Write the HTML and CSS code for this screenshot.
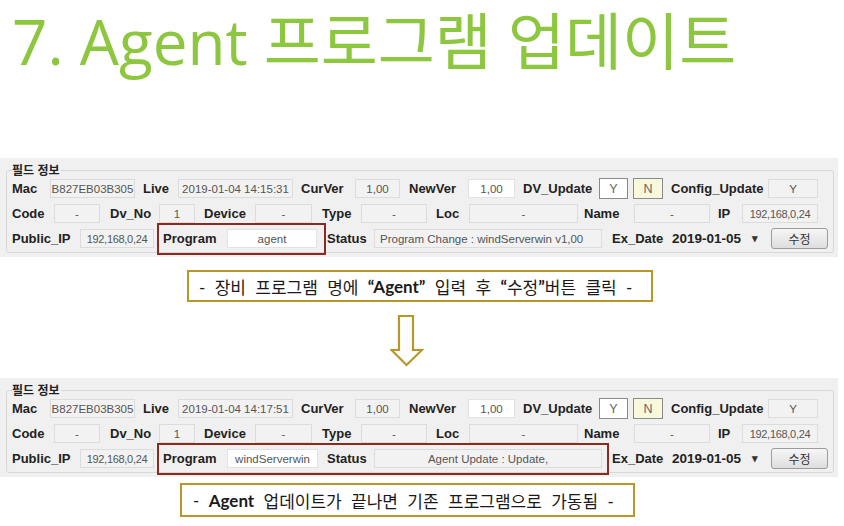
FILE: index.html
```html
<!DOCTYPE html>
<html lang="ko">
<head>
<meta charset="utf-8">
<title>Agent 프로그램 업데이트</title>
<link rel="stylesheet" href="styles.css">
</head>
<body>
<h1 class="title">7. Agent 프로그램 업데이트</h1>

<section class="panel">
  <fieldset class="group">
    <legend class="legend">필드 정보</legend>
    <div class="row">
      <span class="lbl w38">Mac</span><span class="box w85">B827EB03B305</span>
      <span class="lbl ml8 w35">Live</span><span class="box w115">2019-01-04 14:15:31</span>
      <span class="lbl ml8 w54">CurVer</span><span class="box w45">1,00</span>
      <span class="lbl ml9 w59">NewVer</span><span class="box white w47">1,00</span>
      <span class="lbl ml8 w76">DV_Update</span><span class="box yes w29">Y</span><span class="box no ml5 w30">N</span>
      <span class="lbl ml8 w97">Config_Update</span><span class="box w50">Y</span>
    </div>
    <div class="row">
      <span class="lbl w42">Code</span><span class="box w46">-</span>
      <span class="lbl ml10 w49">Dv_No</span><span class="box w36">1</span>
      <span class="lbl ml9 w51">Device</span><span class="box w57">-</span>
      <span class="lbl ml10 w39">Type</span><span class="box w66">-</span>
      <span class="lbl ml9 w33">Loc</span><span class="box w109">-</span>
      <span class="lbl ml6 w50">Name</span><span class="box w76">-</span>
      <span class="lbl ml8 w24">IP</span><span class="box w76 small">192,168,0,24</span>
    </div>
    <div class="row">
      <span class="lbl w68">Public_IP</span><span class="box w74 small">192,168,0,24</span>
      <span class="hl hl1">
        <span class="lbl w64">Program</span><span class="box white w90">agent</span>
      </span>
      <span class="lbl ml1 w47">Status</span><span class="box left w228">Program Change : windServerwin v1,00</span>
      <span class="lbl ml10 w58">Ex_Date</span><span class="combo w93">2019-01-05<span class="caret">▾</span></span>
      <span class="btn ml8 w57">수정</span>
    </div>
  </fieldset>
</section>

<div class="caption c1">- 장비 프로그램 명에 <b>“Agent”</b> 입력 후 <b>“</b>수정<b>”</b>버튼 클릭 -</div>

<div class="arrow">
  <svg width="34" height="52" viewBox="0 0 34 52">
    <polygon points="9,1 23,1 23,35 32,35 16.5,50 1.5,35 9,35" fill="#fff" stroke="#b8962a" stroke-width="2.2" stroke-linejoin="miter"/>
  </svg>
</div>

<section class="panel">
  <fieldset class="group">
    <legend class="legend">필드 정보</legend>
    <div class="row">
      <span class="lbl w38">Mac</span><span class="box w85">B827EB03B305</span>
      <span class="lbl ml8 w35">Live</span><span class="box w115">2019-01-04 14:17:51</span>
      <span class="lbl ml8 w54">CurVer</span><span class="box w45">1,00</span>
      <span class="lbl ml9 w59">NewVer</span><span class="box white w47">1,00</span>
      <span class="lbl ml8 w76">DV_Update</span><span class="box yes w29">Y</span><span class="box no ml5 w30">N</span>
      <span class="lbl ml8 w97">Config_Update</span><span class="box w50">Y</span>
    </div>
    <div class="row">
      <span class="lbl w42">Code</span><span class="box w46">-</span>
      <span class="lbl ml10 w49">Dv_No</span><span class="box w36">1</span>
      <span class="lbl ml9 w51">Device</span><span class="box w57">-</span>
      <span class="lbl ml10 w39">Type</span><span class="box w66">-</span>
      <span class="lbl ml9 w33">Loc</span><span class="box w109">-</span>
      <span class="lbl ml6 w50">Name</span><span class="box w76">-</span>
      <span class="lbl ml8 w24">IP</span><span class="box w76 small">192,168,0,24</span>
    </div>
    <div class="row">
      <span class="lbl w68">Public_IP</span><span class="box w74 small">192,168,0,24</span>
      <span class="hl hl2">
        <span class="lbl w64">Program</span><span class="box white w91">windServerwin</span>
        <span class="lbl ml9 w47">Status</span><span class="box w228">Agent Update : Update,</span>
      </span>
      <span class="lbl ml3 w58">Ex_Date</span><span class="combo w93">2019-01-05<span class="caret">▾</span></span>
      <span class="btn ml8 w57">수정</span>
    </div>
  </fieldset>
</section>

<div class="caption c2">- <b>Agent</b> 업데이트가 끝나면 기존 프로그램으로 가동됨 -</div>
</body>
</html>
```

FILE: styles.css
```css
* { box-sizing: border-box; }
body {
  margin: 0;
  width: 844px;
  height: 526px;
  overflow: hidden;
  background: #fff;
  font-family: "Liberation Sans", "Noto Sans CJK KR", sans-serif;
}
.title {
  margin: -5px 0 0;
  height: 163px;
  padding: 0 0 0 12px;
  font-family: "Open Sans", "Noto Sans CJK KR", sans-serif;
  font-weight: 400;
  font-size: 62px;
  line-height: 92px;
  color: #8dc63f;
  white-space: nowrap;
}
.panel {
  width: 838px;
  height: 99px;
  background: #f0f0f0;
  padding: 6px 0 0 6px;
}
.group {
  margin: 0;
  width: 828px;
  border: 1px solid #d8d8d8;
  border-radius: 3px;
  padding: 0 0 1px 5px;
  min-width: 0;
}
.legend {
  padding: 0 1px 0 0;
  font-weight: bold;
  font-size: 12px;
  line-height: 12px;
  color: #222;
  font-family: "Noto Sans CJK KR", sans-serif;
}
.row {
  display: flex;
  align-items: center;
  height: 25px;
}
.lbl {
  flex: none;
  font-weight: bold;
  font-size: 13px;
  color: #222;
  white-space: nowrap;
}
.box {
  flex: none;
  height: 19px;
  border: 1px solid #dcdcdc;
  background: #f2f2f2;
  font-size: 11.5px;
  color: #555;
  display: flex;
  align-items: center;
  justify-content: center;
  white-space: nowrap;
  overflow: hidden;
}
.box.small { font-size: 11px; letter-spacing: -0.3px; }
.box.left { justify-content: flex-start; padding-left: 5px; }
.box.white { background: #fff; border-color: #e2e2e2; }
.box.yes { background: #fff; border-color: #8a8a8a; height: 21px; color: #666; font-size: 12.5px; }
.box.no { background: #f8f8dc; border-color: #8a8a8a; height: 21px; color: #666; font-size: 12.5px; }
.hl {
  flex: none;
  display: flex;
  align-items: center;
  height: 32px;
  margin-left: 3px;
  border: 2px solid #8c2a22;
  padding-left: 4px;
}
.hl1 { padding-right: 7px; }
.hl2 { padding-right: 5px; }
.combo {
  flex: none;
  display: flex;
  align-items: center;
  font-weight: bold;
  font-size: 13.5px;
  color: #222;
  padding-left: 2px;
}
.caret { font-size: 11px; margin-left: 11px; color: #333; }
.btn {
  flex: none;
  height: 21px;
  border: 1px solid #9c9c9c;
  border-radius: 3px;
  background: linear-gradient(#f6f6f6, #dedede);
  font-family: "Noto Sans CJK KR", sans-serif;
  font-size: 12px;
  color: #333;
  display: flex;
  align-items: center;
  justify-content: center;
}
.w24 { width: 24px; } .w29 { width: 29px; } .w30 { width: 30px; } .w33 { width: 33px; }
.w35 { width: 35px; } .w36 { width: 36px; } .w38 { width: 38px; } .w39 { width: 39px; }
.w42 { width: 42px; } .w45 { width: 45px; } .w46 { width: 46px; } .w47 { width: 47px; }
.w49 { width: 49px; } .w50 { width: 50px; } .w51 { width: 51px; } .w54 { width: 54px; }
.w57 { width: 57px; } .w58 { width: 58px; } .w59 { width: 59px; } .w64 { width: 64px; }
.w66 { width: 66px; } .w68 { width: 68px; } .w74 { width: 74px; } .w76 { width: 76px; }
.w85 { width: 85px; } .w90 { width: 90px; } .w91 { width: 91px; } .w93 { width: 93px; } .w97 { width: 97px; }
.w109 { width: 109px; } .w115 { width: 115px; } .w228 { width: 228px; }
.ml1 { margin-left: 1px; } .ml3 { margin-left: 3px; } .ml5 { margin-left: 5px; } .ml6 { margin-left: 6px; }
.ml8 { margin-left: 8px; } .ml9 { margin-left: 9px; } .ml10 { margin-left: 10px; }
.caption {
  display: flex;
  align-items: center;
  border: 2px solid #b8962a;
  font-family: "Lato", "Noto Sans CJK KR", sans-serif;
  font-size: 17px;
  word-spacing: 5px;
  color: #1a1a1a;
  white-space: pre;
}
.caption b { font-weight: bold; }
.c1 { margin: 13px 0 0 187px; width: 466px; height: 32px; padding-left: 10px; }
.c2 { margin: 6px 0 0 180px; width: 455px; height: 34px; padding-left: 11px; }
.arrow {
  height: 76px;
  padding: 13px 0 0 390px;
}
.arrow svg { display: block; }
```
